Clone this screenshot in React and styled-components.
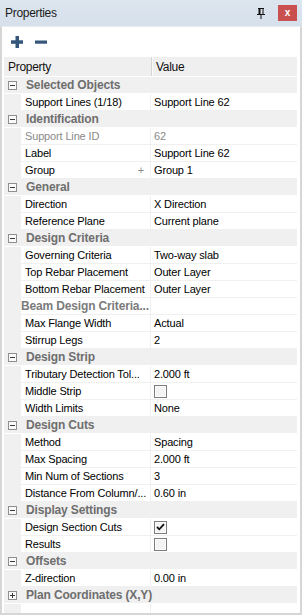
import styled, { createGlobalStyle } from 'styled-components';

const GlobalStyle = createGlobalStyle`
  html, body {
    margin: 0;
    padding: 0;
    background: #ffffff;
  }
  body {
    font-family: "Liberation Sans", Arial, sans-serif;
  }
`;

const Panel = styled.div`
  width: 302px;
  height: 615px;
  box-sizing: border-box;
  display: flex;
  flex-direction: column;
  background: #dae3ed;
  overflow: hidden;
`;

const TitleBar = styled.div`
  height: 26px;
  flex: none;
  display: flex;
  align-items: center;
  padding: 0 5px 0 5px;
  font-size: 12px;
  letter-spacing: -0.3px;
  color: #1b1b1b;
  background: linear-gradient(#dde6ef, #d6e0eb);
`;

const Title = styled.span`
  flex: 1;
`;

const PinButton = styled.div`
  width: 12px;
  height: 16px;
  display: flex;
  align-items: center;
  justify-content: center;
  margin-right: 11px;
`;

const CloseButton = styled.div`
  width: 19px;
  height: 16px;
  background: #c9504f;
  color: #fff;
  font-size: 10px;
  font-weight: 700;
  letter-spacing: 0;
  display: flex;
  align-items: center;
  justify-content: center;
  line-height: 1;
  padding-bottom: 1px;
  box-sizing: border-box;
`;

const Body = styled.div`
  flex: 1;
  display: flex;
  flex-direction: column;
  background: #ffffff;
  border: 2px solid #d6d6d6;
  border-top: 1px solid #e8edf2;
  min-height: 0;
`;

const Toolbar = styled.div`
  height: 30px;
  flex: none;
  display: flex;
  align-items: center;
  gap: 12px;
  padding-left: 9px;
`;

const ToolIcon = styled.svg`
  display: block;
`;

const Grid = styled.div`
  flex: 1;
  display: flex;
  flex-direction: column;
  margin: 0 3px 0 2px;
  font-size: 11px;
  letter-spacing: -0.15px;
  color: #000;
  min-height: 0;
`;

const Header = styled.div`
  height: 19px;
  flex: none;
  display: grid;
  grid-template-columns: 147px 1fr;
  background: #efefef;
  border-bottom: 1px solid #ffffff;
  font-size: 12px;
  letter-spacing: -0.3px;
`;

const HeaderCell = styled.div`
  display: flex;
  align-items: center;
  padding-left: 4px;
  border-left: ${({ $divider }) => ($divider ? '1px solid #d5d5d5' : 'none')};
  box-shadow: ${({ $divider }) => ($divider ? 'inset 1px 0 0 #fbfbfb' : 'none')};
  color: #111;
`;

const CategoryRow = styled.div`
  height: 16px;
  flex: none;
  display: flex;
  align-items: center;
  background: #f0f0f0;
  border-bottom: 1px solid #ffffff;
  font-size: 12px;
  font-weight: 700;
  color: #6e6e6e;
  letter-spacing: -0.15px;
`;

const Expander = styled.span`
  width: 7px;
  height: 7px;
  margin: 0 9px 0 4px;
  border: 1px solid #8f8f8f;
  background: #fafafa;
  position: relative;
  flex: none;
  &::before,
  &::after {
    content: '';
    position: absolute;
    background: #3a3a3a;
  }
  &::before {
    left: 1px;
    right: 1px;
    top: 3px;
    height: 1px;
  }
  &::after {
    display: ${({ $open }) => ($open ? 'none' : 'block')};
    top: 1px;
    bottom: 1px;
    left: 3px;
    width: 1px;
  }
`;

const PropRow = styled.div`
  height: 16px;
  flex: none;
  display: grid;
  grid-template-columns: 17px 129px 1px 1fr;
  border-bottom: 1px solid #f0f0f0;
  line-height: 16px;
`;

const Gutter = styled.div`
  background: #f0f0f0;
`;

const NameCell = styled.div`
  position: relative;
  padding-left: ${({ $sub }) => ($sub ? '0' : '4px')};
  white-space: nowrap;
  overflow: hidden;
  color: ${({ $disabled, $sub }) => ($disabled ? '#8a8a8a' : $sub ? '#7b7b7b' : '#000')};
  font-weight: ${({ $sub }) => ($sub ? 700 : 400)};
  font-size: ${({ $sub }) => ($sub ? '12px' : '11px')};
`;

const MoreMark = styled.span`
  position: absolute;
  right: 6px;
  top: 0;
  color: #8a8a8a;
  font-size: 11px;
`;

const Divider = styled.div`
  background: #f0f0f0;
`;

const ValueCell = styled.div`
  padding-left: 3px;
  display: flex;
  align-items: center;
  white-space: nowrap;
  color: ${({ $disabled }) => ($disabled ? '#8a8a8a' : '#000')};
`;

const Check = styled.span`
  width: 11px;
  height: 11px;
  border: 1px solid #7c7c7c;
  background: #f3f3f3;
  box-shadow: inset 0 0 0 1px #fdfdfd;
  display: flex;
  align-items: center;
  justify-content: center;
`;

const Filler = styled.div`
  flex: 1;
  display: grid;
  grid-template-columns: 17px 129px 1px 1fr;
`;

const sections = [
  {
    title: 'Selected Objects',
    rows: [{ name: 'Support Lines (1/18)', value: 'Support Line 62' }],
  },
  {
    title: 'Identification',
    rows: [
      { name: 'Support Line ID', value: '62', disabled: true },
      { name: 'Label', value: 'Support Line 62' },
      { name: 'Group', value: 'Group 1', more: true },
    ],
  },
  {
    title: 'General',
    rows: [
      { name: 'Direction', value: 'X Direction' },
      { name: 'Reference Plane', value: 'Current plane' },
    ],
  },
  {
    title: 'Design Criteria',
    rows: [
      { name: 'Governing Criteria', value: 'Two-way slab' },
      { name: 'Top Rebar Placement', value: 'Outer Layer' },
      { name: 'Bottom Rebar Placement', value: 'Outer Layer' },
      { name: 'Beam Design Criteria...', sub: true },
      { name: 'Max Flange Width', value: 'Actual' },
      { name: 'Stirrup Legs', value: '2' },
    ],
  },
  {
    title: 'Design Strip',
    rows: [
      { name: 'Tributary Detection Tol...', value: '2.000 ft' },
      { name: 'Middle Strip', check: false },
      { name: 'Width Limits', value: 'None' },
    ],
  },
  {
    title: 'Design Cuts',
    rows: [
      { name: 'Method', value: 'Spacing' },
      { name: 'Max Spacing', value: '2.000 ft' },
      { name: 'Min Num of Sections', value: '3' },
      { name: 'Distance From Column/...', value: '0.60 in' },
    ],
  },
  {
    title: 'Display Settings',
    rows: [
      { name: 'Design Section Cuts', check: true },
      { name: 'Results', check: false },
    ],
  },
  {
    title: 'Offsets',
    rows: [{ name: 'Z-direction', value: '0.00 in' }],
  },
  { title: 'Plan Coordinates (X,Y)', collapsed: true, rows: [] },
];

function PinIcon() {
  return (
    <svg width='8' height='11' viewBox='0 0 8 11'>
      <rect x='1' y='0' width='6' height='1' fill='#111' />
      <rect x='1.5' y='1' width='2' height='5' fill='#111' />
      <rect x='5.5' y='1' width='1' height='5' fill='#111' />
      <rect x='0' y='6' width='8' height='1' fill='#111' />
      <rect x='3.5' y='7' width='1' height='4' fill='#111' />
    </svg>
  );
}

function CheckBox({ checked }) {
  return (
    <Check>
      {checked && (
        <svg width='9' height='8' viewBox='0 0 9 8'>
          <path d='M1 4 L3.3 6.3 L8 1.2' stroke='#111' strokeWidth='1.8' fill='none' />
        </svg>
      )}
    </Check>
  );
}

function PropertyRow({ row }) {
  return (
    <PropRow>
      <Gutter />
      <NameCell $disabled={row.disabled} $sub={row.sub}>
        {row.name}
        {row.more && <MoreMark>+</MoreMark>}
      </NameCell>
      <Divider />
      <ValueCell $disabled={row.disabled}>
        {row.check !== undefined ? <CheckBox checked={row.check} /> : row.value}
      </ValueCell>
    </PropRow>
  );
}

export default function App() {
  return (
    <>
      <GlobalStyle />
      <Panel>
        <TitleBar>
          <Title>Properties</Title>
          <PinButton>
            <PinIcon />
          </PinButton>
          <CloseButton>x</CloseButton>
        </TitleBar>
        <Body>
          <Toolbar>
            <ToolIcon width='12' height='12' viewBox='0 0 12 12'>
              <rect x='4.5' y='0' width='3.5' height='12' fill='#34567a' />
              <rect x='0' y='4.3' width='12' height='3.5' fill='#34567a' />
            </ToolIcon>
            <ToolIcon width='12' height='12' viewBox='0 0 12 12'>
              <rect x='0' y='4.5' width='12' height='3.2' fill='#34567a' />
            </ToolIcon>
          </Toolbar>
          <Grid>
            <Header>
              <HeaderCell>Property</HeaderCell>
              <HeaderCell $divider>Value</HeaderCell>
            </Header>
            {sections.map((section) => (
              <div key={section.title}>
                <CategoryRow>
                  <Expander $open={!section.collapsed} />
                  {section.title}
                </CategoryRow>
                {section.rows.map((row) => (
                  <PropertyRow key={row.name} row={row} />
                ))}
              </div>
            ))}
            <Filler>
              <Gutter />
              <div />
              <Divider />
              <div />
            </Filler>
          </Grid>
        </Body>
      </Panel>
    </>
  );
}
